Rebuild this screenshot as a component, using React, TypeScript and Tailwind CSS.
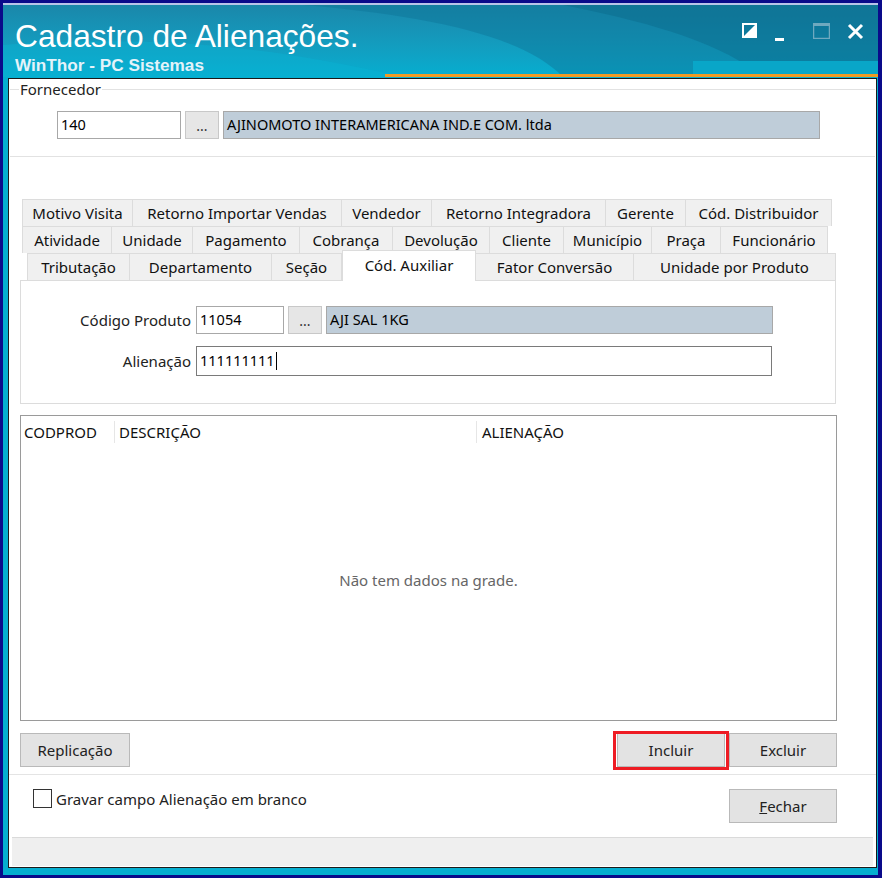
import { useState } from "react";

type Tab = { label: string; w: number };

const tabRows: Tab[][] = [
  [
    { label: "Motivo Visita", w: 111 },
    { label: "Retorno Importar Vendas", w: 209 },
    { label: "Vendedor", w: 90 },
    { label: "Retorno Integradora", w: 174 },
    { label: "Gerente", w: 80 },
    { label: "Cód. Distribuidor", w: 146 },
  ],
  [
    { label: "Atividade", w: 90 },
    { label: "Unidade", w: 81 },
    { label: "Pagamento", w: 107 },
    { label: "Cobrança", w: 93 },
    { label: "Devolução", w: 97 },
    { label: "Cliente", w: 74 },
    { label: "Município", w: 88 },
    { label: "Praça", w: 69 },
    { label: "Funcionário", w: 107 },
  ],
];

const lastRow: Tab[] = [
  { label: "Tributação", w: 103 },
  { label: "Departamento", w: 142 },
  { label: "Seção", w: 70 },
  { label: "Cód. Auxiliar", w: 134 },
  { label: "Fator Conversão", w: 158 },
  { label: "Unidade por Produto", w: 202 },
];

const font = { fontFamily: "'Noto Sans', 'Open Sans', sans-serif" };
const arial = { fontFamily: "'Liberation Sans', Arial, sans-serif" };

function TitleBar() {
  return (
    <div className="relative h-[72px] overflow-hidden bg-gradient-to-b from-[#1a87aa] to-[#05aed0]">
      <svg className="absolute inset-0" width="875" height="72" viewBox="0 0 875 72">
        <path d="M300 0 C420 10 520 30 560 72 L875 72 L875 0 Z" fill="#0d7396" opacity="0.45" />
        <path d="M560 0 C660 20 720 40 760 72 L875 72 L875 0 Z" fill="#0a6686" opacity="0.4" />
        <rect x="690" y="56" width="185" height="16" fill="#09a6c8" />
        <path d="M0 40 C150 30 260 40 400 72 L0 72 Z" fill="#0bb3d4" opacity="0.4" />
      </svg>
      <div className="relative pl-[12px] pt-[14px]">
        <div className="text-[31.7px] leading-[34px] text-white" style={arial}>
          Cadastro de Alienações.
        </div>
        <div className="mt-[3px] text-[17.2px] font-bold leading-[18px] text-[#e4f3fa]" style={arial}>
          WinThor - PC Sistemas
        </div>
      </div>
      {/* window controls */}
      <div className="absolute right-[14px] top-[18px] flex items-start gap-[18px]">
        <svg width="15" height="15" viewBox="0 0 15 15">
          <rect x="1" y="1" width="13" height="13" fill="none" stroke="white" strokeWidth="2" />
          <path d="M1 14 L14 1 L14 14 Z" fill="white" />
        </svg>
        <svg width="9" height="18" viewBox="0 0 9 18">
          <rect x="0" y="15" width="9" height="3" fill="white" />
        </svg>
        <svg width="17" height="16" viewBox="0 0 17 16" className="ml-[11px]">
          <rect x="0.5" y="0.5" width="16" height="15" fill="none" stroke="#6fa9bf" strokeWidth="1.5" />
          <rect x="0" y="0" width="17" height="3" fill="#6fa9bf" />
        </svg>
        <svg width="17" height="17" viewBox="0 0 17 17" className="-ml-[1px]">
          <path d="M2 2 L15 15 M15 2 L2 15" stroke="white" strokeWidth="3" />
        </svg>
      </div>
      <div className="absolute bottom-0 left-[382px] right-0 h-[3px] bg-[#f29a23]" />
    </div>
  );
}

function Field({ value, w }: { value: string; w: number }) {
  return (
    <div
      className="flex h-[28px] items-center border border-[#a8a8a8] bg-white px-[3px] text-[14.5px] text-black"
      style={{ width: w }}
    >
      {value}
    </div>
  );
}

function Dots() {
  return (
    <div className="flex h-[28px] w-[34px] items-end justify-center border border-[#c8c8c8] bg-[#e6e6e6] pb-[5px] text-[14px] leading-none text-[#333]">
      ...
    </div>
  );
}

function Button({ label, w = 108 }: { label: React.ReactNode; w?: number }) {
  return (
    <div
      className="flex h-[34px] items-center justify-center border border-[#b9b9b9] bg-[#e3e3e3] text-[15px] text-[#222]"
      style={{ width: w }}
    >
      {label}
    </div>
  );
}

function TabCell({ t }: { t: Tab }) {
  return (
    <div
      className="flex items-center justify-center border-r border-t border-[#dcdcdc] bg-[#f0f0f0] text-[15px] text-[#111] first:border-l"
      style={{ width: t.w }}
    >
      {t.label}
    </div>
  );
}

function Tabs() {
  const [active] = useState("Cód. Auxiliar");
  return (
    <div className="ml-[13px] mt-[42px]">
      {tabRows.map((row, i) => (
        <div key={i} className="flex h-[27px]">
          {row.map((t) => (
            <TabCell key={t.label} t={t} />
          ))}
        </div>
      ))}
      <div className="relative flex h-[27px] pl-[5px]">
        {lastRow.map((t) =>
          t.label === active ? (
            <div
              key={t.label}
              className="relative z-10 -mt-[3px] flex h-[31px] items-start justify-center border-l border-r border-t border-[#dcdcdc] bg-white pt-[3px] text-[15px] text-[#111]"
              style={{ width: t.w }}
            >
              {t.label}
            </div>
          ) : (
            <TabCell key={t.label} t={t} />
          )
        )}
      </div>
      <div className="-ml-[2px] w-[816px] border border-[#dcdcdc] bg-white px-[2px] pb-[27px] pt-[25px]">
        <div className="flex items-center gap-[4px]">
          <div className="w-[169px] pr-[1px] text-right text-[15px] text-[#222]">Código Produto</div>
          <Field value="11054" w={88} />
          <Dots />
          <div className="flex h-[28px] w-[447px] items-center border border-[#a8a8a8] bg-[#bfcdd9] px-[3px] text-[14.5px] text-black">
            AJI SAL 1KG
          </div>
        </div>
        <div className="mt-[12px] flex items-center gap-[4px]">
          <div className="w-[169px] pr-[1px] text-right text-[15px] text-[#222]">Alienação</div>
          <div className="flex h-[30px] w-[576px] items-center border border-[#7a7a7a] bg-white px-[3px] text-[14.5px] text-black">
            111111111<span className="ml-[1px] inline-block h-[18px] w-[1px] bg-black" />
          </div>
        </div>
      </div>
    </div>
  );
}

function Grid() {
  return (
    <div className="ml-[11px] mt-[11px] flex h-[306px] w-[817px] flex-col border border-[#9a9a9a] bg-white">
      <div className="mt-[3px] flex h-[26px] items-center text-[15px] text-[#111]">
        <div className="w-[94px] border-r border-[#e6e6e6] pl-[3px]">CODPROD</div>
        <div className="w-[362px] border-r border-[#e6e6e6] pl-[4px]">DESCRIÇÃO</div>
        <div className="pl-[5px]">ALIENAÇÃO</div>
      </div>
      <div className="flex flex-1 items-center justify-center pb-[4px] text-[15px] text-[#666]">
        Não tem dados na grade.
      </div>
    </div>
  );
}

export default function App() {
  return (
    <div className="h-[878px] w-[882px] bg-[#0a0a8a] pb-[3px] pl-[3px] pr-[4px] pt-[3px]" style={font}>
      <div className="flex h-full flex-col border-t-2 border-[#b8c4e8] bg-[#05aed0]">
        <TitleBar />
        <div className="mb-[7px] ml-[5px] mr-[1px] mt-[1px] flex flex-1 flex-col border border-[#1a1a1a] bg-white">
          {/* Fornecedor */}
          <div className="relative mx-[1px] mt-[10px] h-[68px] border-b border-t border-[#e2e2e2]">
            <div className="absolute -top-[10px] left-[9px] bg-white px-[1px] text-[15px] leading-[18px] text-[#222]">
              Fornecedor
            </div>
            <div className="ml-[47px] mt-[21px] flex gap-[4px]">
              <Field value="140" w={124} />
              <Dots />
              <div className="flex h-[28px] w-[597px] items-center border border-[#a8a8a8] bg-[#bfcdd9] px-[3px] text-[14.5px] text-black">
                AJINOMOTO INTERAMERICANA IND.E COM. ltda
              </div>
            </div>
          </div>

          <Tabs />
          <Grid />

          <div className="ml-[11px] mt-[12px] flex w-[817px] items-center">
            <Button label="Replicação" w={110} />
            <div className="flex-1" />
            <div className="relative">
              <Button label="Incluir" />
              <div className="absolute -bottom-[3px] -left-[4px] -right-[4px] -top-[2px] border-[3px] border-[#ee1c24]" />
            </div>
            <div className="ml-[4px]">
              <Button label="Excluir" />
            </div>
          </div>

          <div className="mt-[7px] flex flex-1 flex-col border-t border-[#e4e4e4]">
            <div className="ml-[11px] flex w-[817px] items-start pt-[14px]">
              <div className="ml-[13px] h-[19px] w-[19px] border border-[#333] bg-white" />
              <div className="ml-[4px] text-[15px] leading-[20px] text-[#222]">Gravar campo Alienação em branco</div>
              <div className="flex-1" />
              <Button
                label={
                  <span>
                    <span className="underline">F</span>echar
                  </span>
                }
              />
            </div>
            <div className="flex-1" />
            <div className="mx-[3px] mb-[1px] h-[29px] border-t border-[#dadada] bg-[#efefef]" />
          </div>
        </div>
      </div>
    </div>
  );
}
